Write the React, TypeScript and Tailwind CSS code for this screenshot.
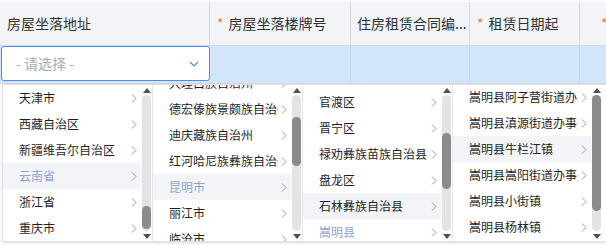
import React from 'react';

type Item = { label: string; state?: 'active' | 'hover' | 'picked' };

interface PanelProps {
  items: Item[];
  offset: number;
  thumbTop: number;
  thumbHeight: number;
  last?: boolean;
}

const Arrow: React.FC<{ up?: boolean }> = ({ up }) => (
  <div className="flex h-[10px] items-center justify-center">
    <svg width="8" height="5" viewBox="0 0 8 5">
      <path d={up ? 'M0 5 L4 0 L8 5 Z' : 'M0 0 L4 5 L8 0 Z'} fill="#505050" />
    </svg>
  </div>
);

const Chevron = () => (
  <svg width="6" height="9" viewBox="0 0 6 9" className="ml-[3px] shrink-0">
    <path d="M1 0.5 L5 4.5 L1 8.5" fill="none" stroke="#9a9a9a" strokeWidth="1" />
  </svg>
);

const Panel: React.FC<PanelProps> = ({ items, offset, thumbTop, thumbHeight, last }) => (
  <div className={`flex h-full w-[150px] shrink-0 ${last ? '' : 'border-r border-[#e4e7ed]'}`}>
    <div className="h-full w-[138px] overflow-hidden">
      <div style={{ marginTop: offset }}>
        {items.map((it) => (
          <div
            key={it.label}
            className={`flex h-[26px] items-center pl-[16px] pr-[4px] ${
              it.state === 'active' || it.state === 'hover' ? 'bg-[#f3f4f8]' : ''
            }`}
          >
            <span
              className={`flex-1 overflow-hidden whitespace-nowrap ${
                it.state === 'active' || it.state === 'picked' ? 'text-[#8fa5cc]' : 'text-[#1f1f1f]'
              }`}
            >
              {it.label}
            </span>
            <Chevron />
          </div>
        ))}
      </div>
    </div>
    <div className="flex h-full w-[11px] flex-col">
      <Arrow up />
      <div className="mx-[1px] flex-1 rounded-full bg-[#e3e3e3]">
        <div
          className="rounded-full bg-[#8b8b8b]"
          style={{ marginTop: thumbTop, height: thumbHeight }}
        />
      </div>
      <Arrow />
    </div>
  </div>
);

const Star = () => <span className="mr-[5px] text-[#f27a24]">*</span>;

export default function App() {
  const p1: Item[] = [
    { label: '天津市' },
    { label: '西藏自治区' },
    { label: '新疆维吾尔自治区' },
    { label: '云南省', state: 'active' },
    { label: '浙江省' },
    { label: '重庆市' },
  ];
  const p2: Item[] = [
    { label: '大理白族自治州' },
    { label: '德宏傣族景颇族自治州' },
    { label: '迪庆藏族自治州' },
    { label: '红河哈尼族彝族自治州' },
    { label: '昆明市', state: 'active' },
    { label: '丽江市' },
    { label: '临沧市' },
  ];
  const p3: Item[] = [
    { label: '呈贡区' },
    { label: '官渡区' },
    { label: '晋宁区' },
    { label: '禄劝彝族苗族自治县' },
    { label: '盘龙区' },
    { label: '石林彝族自治县', state: 'hover' },
    { label: '嵩明县', state: 'picked' },
  ];
  const p4: Item[] = [
    { label: '嵩明县阿子营街道办事处' },
    { label: '嵩明县滇源街道办事处' },
    { label: '嵩明县牛栏江镇', state: 'hover' },
    { label: '嵩明县嵩阳街道办事处' },
    { label: '嵩明县小街镇' },
    { label: '嵩明县杨林镇' },
    { label: '嵩明县职教园区' },
  ];

  return (
    <div
      className="relative h-[245px] w-[606px] overflow-hidden bg-white text-[14px] text-[#303133]"
      style={{ fontFamily: '"Noto Sans CJK SC", "Noto Sans", sans-serif' }}
    >
      <div className="h-[2px] bg-[#fbfbfc]" />
      {/* header */}
      <div className="flex h-[44px] border-b border-[#d9dbe0] bg-[#f3f4f8]">
        <div className="flex w-[210px] shrink-0 items-center border-r border-[#d9dbe0] pl-[7px]">房屋坐落地址</div>
        <div className="flex w-[141px] shrink-0 items-center border-r border-[#d9dbe0] pl-[7px]">
          <Star />
          房屋坐落楼牌号
        </div>
        <div className="flex w-[119px] shrink-0 items-center border-r border-[#d9dbe0] pl-[6px]">住房租赁合同编...</div>
        <div className="flex w-[110px] shrink-0 items-center border-r border-[#d9dbe0] pl-[7px]">
          <Star />
          租赁日期起
        </div>
        <div className="flex flex-1 items-center pl-[21px]">
          <Star />
        </div>
      </div>
      {/* edit row */}
      <div className="flex h-[38px] border-b border-[#d9dbe0] bg-[#d2e5fa]">
        <div className="w-[210px] shrink-0 pl-[1px]">
          <div className="flex h-[35px] items-center rounded-[3px] border border-[#4a8cf0] bg-white pl-[14px] pr-[10px]">
            <span className="flex-1 text-[#a8abb2]">- 请选择 -</span>
            <svg width="10" height="6" viewBox="0 0 10 6">
              <path d="M1 1 L5 5 L9 1" fill="none" stroke="#4a8cf0" strokeWidth="1.2" />
            </svg>
          </div>
        </div>
        <div className="w-[141px] shrink-0 border-r border-[#c9d6e6]" />
        <div className="w-[119px] shrink-0 border-r border-[#c9d6e6]" />
        <div className="w-[110px] shrink-0 border-r border-[#c9d6e6]" />
        <div className="flex-1" />
      </div>

      {/* cascader popover */}
      <div className="absolute left-[2px] top-[84px] flex h-[158px] w-[610px] border border-[#dcdfe6] bg-white text-[12px] shadow-sm">
        <Panel items={p1} offset={0} thumbTop={111} thumbHeight={23} />
        <Panel items={p2} offset={-15} thumbTop={22} thumbHeight={49} />
        <Panel items={p3} offset={-22} thumbTop={38} thumbHeight={56} />
        <Panel items={p4} offset={-1} thumbTop={0} thumbHeight={116} last />
      </div>
    </div>
  );
}
